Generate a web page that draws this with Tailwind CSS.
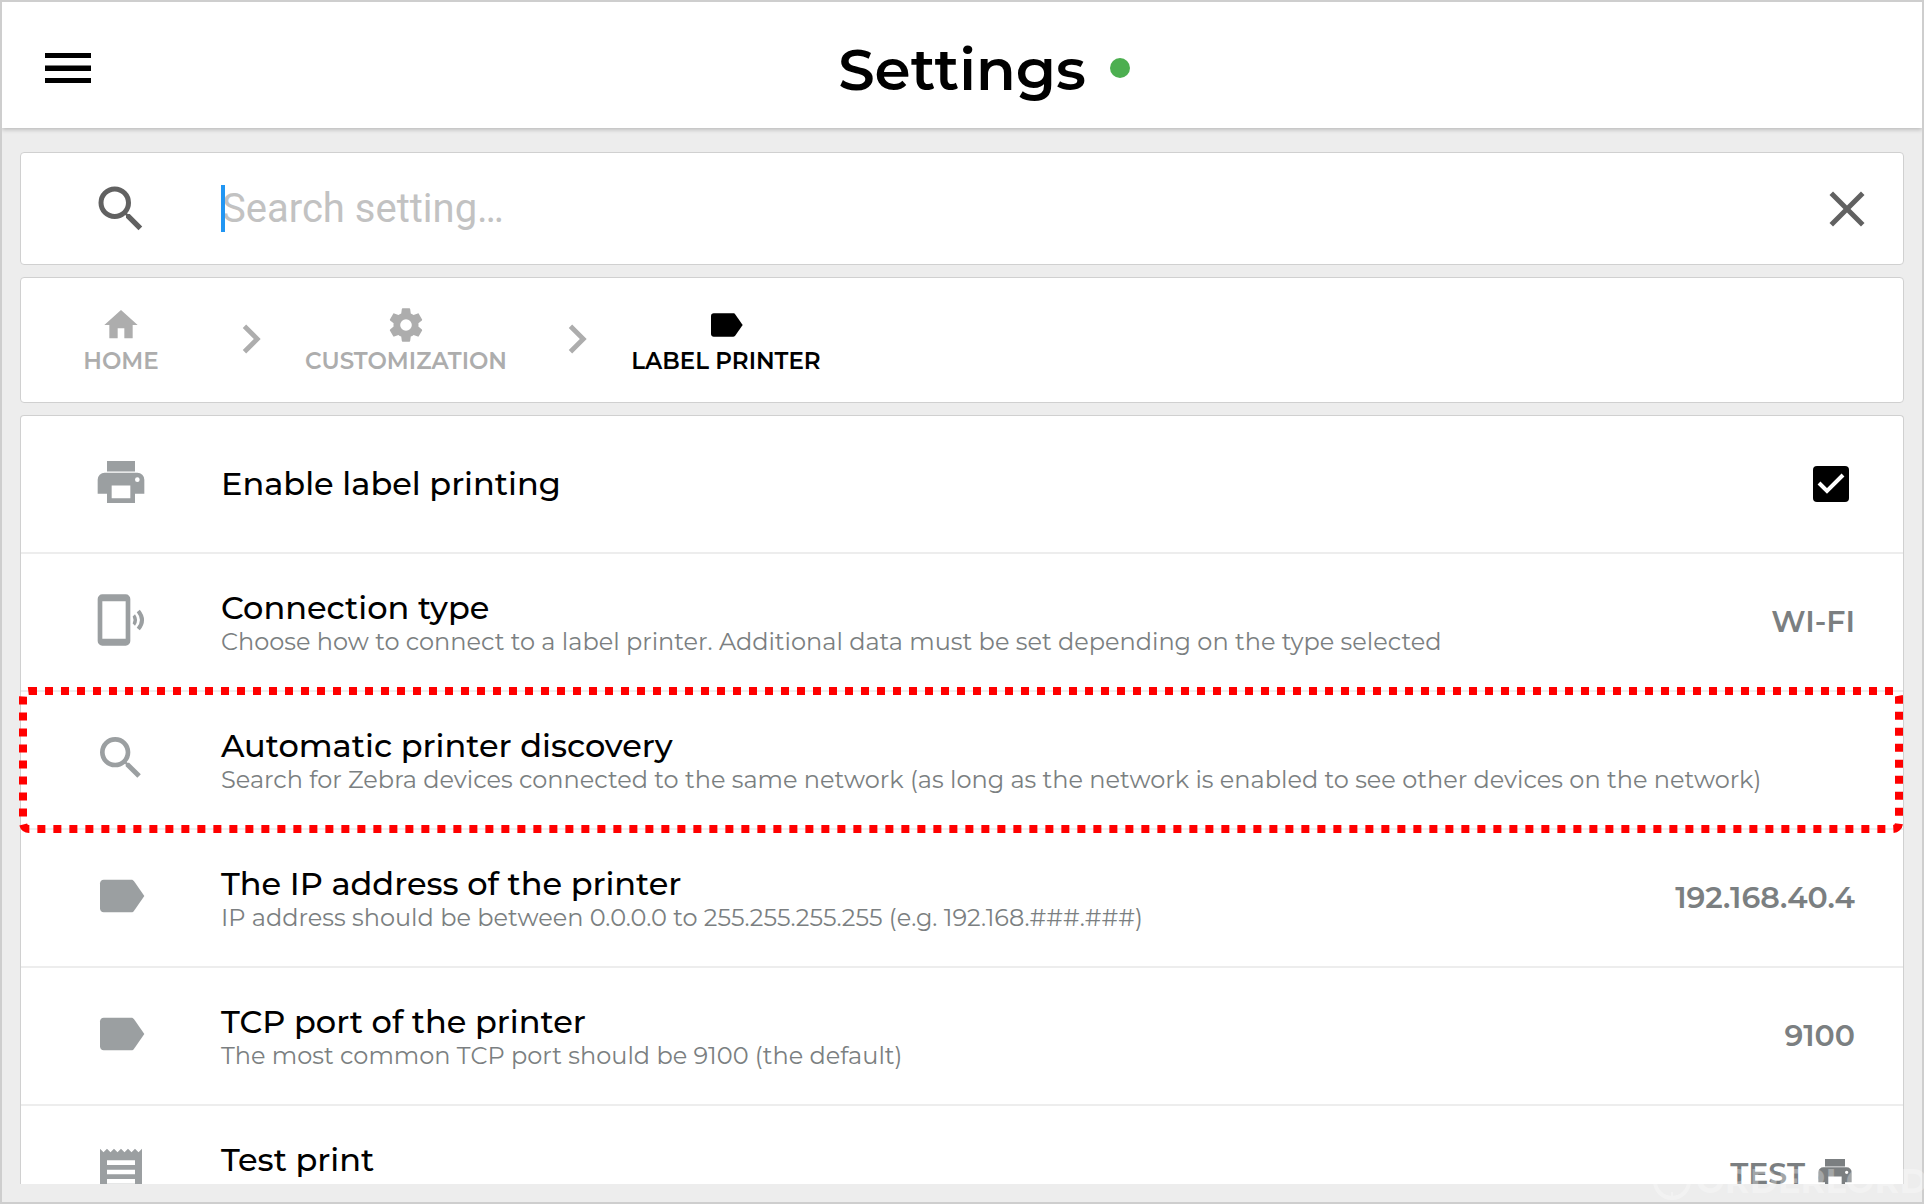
<!DOCTYPE html>
<html lang="en">
<head>
<meta charset="utf-8">
<meta name="viewport" content="width=device-width, initial-scale=1">
<title>Settings</title>
<script src="https://cdn.jsdelivr.net/npm/@tailwindcss/browser@4"></script>
</head>
<body class="bg-[#ededed] font-['Montserrat','Inter',sans-serif] text-black">
<svg class="hidden" aria-hidden="true">
  <symbol id="search" viewBox="0 0 24 24"><path d="M15.5 14h-.79l-.28-.27A6.47 6.47 0 0 0 16 9.5 6.5 6.5 0 1 0 9.5 16c1.61 0 3.09-.59 4.23-1.57l.27.28v.79l5 4.99L20.49 19l-4.99-5zm-6 0C7.01 14 5 11.99 5 9.5S7.01 5 9.5 5 14 7.01 14 9.5 11.99 14 9.5 14z"/></symbol>
  <symbol id="label" viewBox="0 0 24 24"><path d="M17.6 5.7C17.3 5.3 17 5 16.4 5H4.6C3.7 5 3 5.7 3 6.6v10.800c0 .9.7 1.600 1.600 1.600h11.800c.6 0 .9-.3 1.200-.7L22 12z"/></symbol>
  <symbol id="printer" viewBox="0 0 24 24"><path d="M18 3H6v4.500h12M19 12a1 1 0 1 1 0-2 1 1 0 0 1 0 2M16 19H8v-5.500h8M19 8H5a3 3 0 0 0-3 3v6h4v4h12v-4h4v-6a3 3 0 0 0-3-3"/></symbol>
  <symbol id="chevron" viewBox="0 0 24 24"><path d="M8.590 16.580 13.170 12 8.590 7.410 10 6l6 6-6 6z"/></symbol>
</svg>
<div class="flex h-screen flex-col overflow-hidden border-2 border-[#cecece]">
  <header class="relative flex h-[126px] shrink-0 items-center justify-center bg-white pt-1.5 pl-11 shadow-[0_2px_4px_rgba(0,0,0,0.2)]">
    <button type="button" aria-label="Menu" class="absolute left-[38px] flex h-[60px] w-[56px] items-center justify-center">
      <svg class="h-[31px] w-[46px]" viewBox="0 0 46 31"><path d="M0 0h46v5H0zM0 12.500h46v5.500H0zM0 25h46v5H0z"/></svg>
    </button>
    <div class="flex items-center gap-6">
      <h1 class="pt-1 text-[58px] leading-[72px] font-semibold">Settings</h1>
      <span class="size-5 rounded-full bg-[#4caf50]" role="img" aria-label="Online"></span>
    </div>
  </header>

  <main class="flex min-h-0 flex-1 flex-col gap-3 px-[18px] pt-6 pb-[18px]">
    <form role="search" class="flex h-[113px] shrink-0 items-center rounded-sm border border-[#d0d0d0] bg-white pr-[26px]">
      <label for="q" class="flex w-[200px] justify-center" aria-label="Search setting">
        <svg class="size-[60px] fill-[#616161]"><use href="#search"/></svg>
      </label>
      <div class="relative flex-1">
        <input id="q" type="text" placeholder="Search setting…" class="block w-full bg-transparent pl-px font-[Roboto,sans-serif] text-[40px] leading-[48px] outline-none placeholder:text-[#c2c2c2]">
        <span class="absolute top-0 left-0 h-[47px] w-1 bg-[#2196f3]"></span>
      </div>
      <button type="button" aria-label="Clear">
        <svg class="size-[60px] fill-[#616161]" viewBox="0 0 24 24"><path d="M19 6.410 17.590 5 12 10.590 6.410 5 5 6.410 10.590 12 5 17.590 6.410 19 12 13.410 17.590 19 19 17.590 13.410 12z"/></svg>
      </button>
    </form>

    <nav aria-label="Breadcrumb" class="flex h-[126px] shrink-0 items-center rounded-sm border border-[#d0d0d0] bg-white pt-0.5 pl-[42px] text-[23px] font-semibold whitespace-nowrap text-[#adadad]">
      <a href="#" class="flex w-[116px] flex-col items-center leading-8">
        <svg class="size-10 fill-current" viewBox="0 0 24 24"><path d="M10 20v-6h4v6h5v-8h3L12 3 2 12h3v8z"/></svg>
        HOME
      </a>
      <svg class="mr-[25px] mb-1 ml-[43px] size-[58px] fill-current"><use href="#chevron"/></svg>
      <a href="#" class="flex w-[202px] flex-col items-center leading-8">
        <svg class="size-10 fill-current" viewBox="0 0 24 24"><path d="M12 15.500A3.500 3.500 0 0 1 8.500 12 3.500 3.500 0 0 1 12 8.500a3.500 3.500 0 0 1 3.500 3.500 3.500 3.500 0 0 1-3.500 3.500m7.430-2.530c.04-.32.07-.64.07-.97s-.03-.66-.07-1l2.110-1.630c.19-.15.24-.42.12-.64l-2-3.460c-.12-.22-.39-.31-.61-.22l-2.490 1c-.52-.39-1.060-.73-1.690-.98l-.37-2.650A.506.506 0 0 0 14 2h-4c-.25 0-.46.18-.5.42l-.37 2.650c-.63.25-1.170.59-1.690.98l-2.490-1c-.22-.09-.49 0-.61.22l-2 3.460c-.13.22-.07.49.12.64L4.570 11c-.04.34-.07.67-.07 1s.03.65.07.97l-2.110 1.660c-.19.15-.25.42-.12.64l2 3.460c.12.22.39.3.61.22l2.490-1.010c.52.4 1.060.74 1.690.99l.37 2.650c.04.24.25.42.5.42h4c.25 0 .46-.18.5-.42l.37-2.650c.63-.26 1.170-.59 1.690-.99l2.490 1.010c.22.08.49 0 .61-.22l2-3.460c.12-.22.07-.49-.12-.64z"/></svg>
        CUSTOMIZATION
      </a>
      <svg class="mr-[25px] mb-1 ml-[41px] size-[58px] fill-current"><use href="#chevron"/></svg>
      <a href="#" aria-current="page" class="flex w-[190px] flex-col items-center leading-8 text-black">
        <svg class="size-10 fill-current"><use href="#label"/></svg>
        LABEL PRINTER
      </a>
    </nav>

    <section class="relative min-h-0 flex-1 rounded-t-sm border border-b-0 border-[#d0d0d0] bg-white">
      <ul class="h-full overflow-hidden">
        <li class="flex h-[138px] items-center border-b-2 border-[#ededed] pr-12">
          <div class="flex w-[200px] justify-center pb-1"><svg class="size-14 fill-[#9b9fa1]"><use href="#printer"/></svg></div>
          <label for="enable" class="flex-1 text-[32px] leading-9 font-medium">Enable label printing</label>
          <span class="relative mr-1.5 size-9">
            <input id="enable" type="checkbox" checked class="block size-9 appearance-none rounded bg-black">
            <svg class="pointer-events-none absolute inset-0 size-9" viewBox="0 0 36 36" fill="none" stroke="white" stroke-width="4"><path d="m6 17 8 8 16-16"/></svg>
          </span>
        </li>
        <li class="flex h-[138px] items-center border-b-2 border-[#ededed] pr-12">
          <div class="flex w-[200px] justify-center pb-1">
            <svg class="size-14 fill-[#9b9fa1]" viewBox="0 0 24 24"><path fill-rule="evenodd" d="M4 1h10a2 2 0 0 1 2 2v18a2 2 0 0 1-2 2H4a2 2 0 0 1-2-2V3a2 2 0 0 1 2-2zm0 3v16h10V4z"/><path d="M17 10.500 18 9.500q1.800 2.500 0 5l-1-1q.8-1.500 0-3z"/><path d="M19.400 8.100q3.200 3.900 0 7.800" fill="none" stroke="#9b9fa1" stroke-width="1.700"/></svg>
          </div>
          <div class="flex-1 pt-1">
            <h2 class="text-[32px] leading-9 font-medium">Connection type</h2>
            <p class="text-2xl leading-8 text-[#7b7f81]">Choose how to connect to a label printer. Additional data must be set depending on the type selected</p>
          </div>
          <button type="button" class="text-3xl font-semibold text-[#7b7f81]">WI-FI</button>
        </li>
        <li class="flex h-[138px] items-center border-b-2 border-[#ededed] pr-12">
          <div class="flex w-[200px] justify-center pb-1"><svg class="size-14 fill-[#9b9fa1]"><use href="#search"/></svg></div>
          <div class="flex-1 pt-1">
            <h2 class="text-[32px] leading-9 font-medium">Automatic printer discovery</h2>
            <p class="text-2xl leading-8 text-[#7b7f81]">Search for Zebra devices connected to the same network (as long as the network is enabled to see other devices on the network)</p>
          </div>
        </li>
        <li class="flex h-[138px] items-center border-b-2 border-[#ededed] pr-12">
          <div class="flex w-[200px] justify-center pb-1"><svg class="size-14 fill-[#9b9fa1]"><use href="#label"/></svg></div>
          <div class="flex-1 pt-1">
            <h2 class="text-[32px] leading-9 font-medium">The IP address of the printer</h2>
            <p class="text-2xl leading-8 text-[#7b7f81]">IP address should be between 0.0.0.0 to 255.255.255.255 (e.g. 192.168.###.###)</p>
          </div>
          <button type="button" class="text-3xl font-semibold text-[#7b7f81]">192.168.40.4</button>
        </li>
        <li class="flex h-[138px] items-center border-b-2 border-[#ededed] pr-12">
          <div class="flex w-[200px] justify-center pb-1"><svg class="size-14 fill-[#9b9fa1]"><use href="#label"/></svg></div>
          <div class="flex-1 pt-1">
            <h2 class="text-[32px] leading-9 font-medium">TCP port of the printer</h2>
            <p class="text-2xl leading-8 text-[#7b7f81]">The most common TCP port should be 9100 (the default)</p>
          </div>
          <button type="button" class="text-3xl font-semibold text-[#7b7f81]">9100</button>
        </li>
        <li class="flex h-[138px] items-center border-b-2 border-[#ededed] pr-12">
          <div class="flex w-[200px] justify-center pb-1">
            <svg class="size-14 fill-[#9b9fa1]" viewBox="0 0 24 24"><path fill-rule="evenodd" d="m3 22 1.500-1.500L6 22l1.500-1.500L9 22l1.500-1.500L12 22l1.500-1.500L15 22l1.500-1.500L18 22l1.500-1.500L21 22V2l-1.500 1.500L18 2l-1.500 1.500L15 2l-1.500 1.500L12 2l-1.500 1.500L9 2 7.500 3.500 6 2 4.500 3.500 3 2zM18 9H6V7h12zm0 4H6v-2h12zm0 4H6v-2h12z"/></svg>
          </div>
          <div class="flex-1 pt-1">
            <h2 class="text-[32px] leading-9 font-medium">Test print</h2>
            <p class="text-2xl leading-8 text-[#7b7f81]">&nbsp;</p>
          </div>
          <button type="button" class="flex items-center gap-2.5 text-3xl font-semibold text-[#7b7f81]">TEST <svg class="size-10 fill-current"><use href="#printer"/></svg></button>
        </li>
      </ul>
      <!-- dashed highlight around the discovery row -->
      <div class="pointer-events-none absolute top-[271px] right-0 -left-0.5 h-[146px]" aria-hidden="true">
        <svg class="h-full w-full">
          <rect x="4" y="4" rx="6" class="h-[138px] w-[calc(100%-8px)] fill-none stroke-[#ff0000]" stroke-width="8" stroke-dasharray="8 8"/>
        </svg>
      </div>
    </section>
  </main>
</div>
<div class="pointer-events-none absolute right-0 bottom-0 flex h-[46px] w-[272px] items-center gap-1 overflow-hidden text-white opacity-30" aria-hidden="true">
  <svg class="size-10 shrink-0" viewBox="0 0 40 40" fill="none" stroke="currentColor" stroke-width="4"><circle cx="20" cy="20" r="17"/><path d="M20 31v6" stroke-width="2"/></svg>
  <span class="text-[34px] leading-10 font-bold">ORDERLORD</span>
</div>
</body>
</html>
